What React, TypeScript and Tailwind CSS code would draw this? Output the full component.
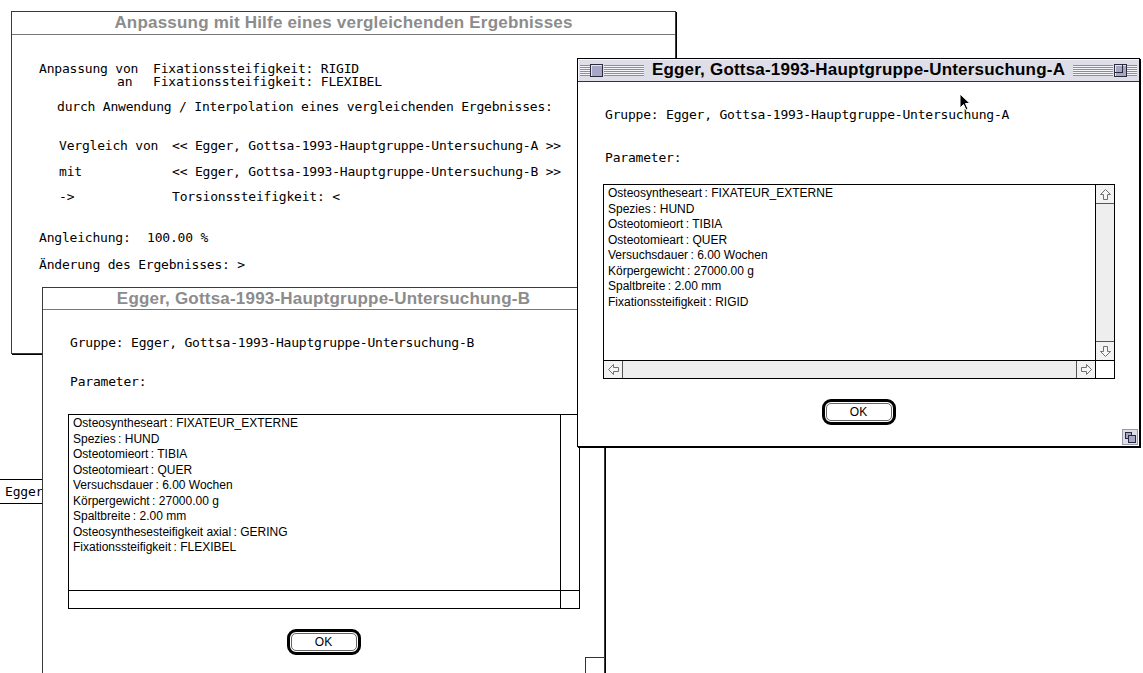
import type { ReactNode } from "react";

// Classic platinum-style desktop: three overlapping dialog windows.
const mono = "font-['DejaVu_Sans_Mono',monospace] text-[13px] tracking-[-0.2px] leading-[12px] whitespace-pre";
const chrome = "font-['Liberation_Sans',Arial,sans-serif]";
const stripes =
  "h-[11px] bg-[repeating-linear-gradient(to_bottom,#8c8ca4_0px,#8c8ca4_1px,#f4f4fa_1px,#f4f4fa_2px)]";

const PARAMS_A = [
  ["Osteosyntheseart", "FIXATEUR_EXTERNE"],
  ["Spezies", "HUND"],
  ["Osteotomieort", "TIBIA"],
  ["Osteotomieart", "QUER"],
  ["Versuchsdauer", "6.00 Wochen"],
  ["Körpergewicht", "27000.00 g"],
  ["Spaltbreite", "2.00 mm"],
  ["Fixationssteifigkeit", "RIGID"],
];

const PARAMS_B = [
  ["Osteosyntheseart", "FIXATEUR_EXTERNE"],
  ["Spezies", "HUND"],
  ["Osteotomieort", "TIBIA"],
  ["Osteotomieart", "QUER"],
  ["Versuchsdauer", "6.00 Wochen"],
  ["Körpergewicht", "27000.00 g"],
  ["Spaltbreite", "2.00 mm"],
  ["Osteosynthesesteifigkeit axial", "GERING"],
  ["Fixationssteifigkeit", "FLEXIBEL"],
];

function Arrow({ dir }: { dir: "up" | "down" | "left" | "right" }) {
  const rot = { up: 0, right: 90, down: 180, left: 270 }[dir];
  return (
    <svg width="13" height="13" viewBox="0 0 13 13" className="block">
      <g transform={`rotate(${rot} 6.5 6.5)`}>
        <path d="M6.5 1.5 L11.5 6.5 L8.5 6.5 L8.5 11.5 L4.5 11.5 L4.5 6.5 L1.5 6.5 Z" fill="#f6f6f6" stroke="#707070" strokeWidth="1" />
      </g>
    </svg>
  );
}

function TitleBar({ title, active, h }: { title: string; active?: boolean; h: string }) {
  if (!active) {
    return (
      <div className={`${h} flex items-center justify-center border-b border-[#777] bg-white`}>
        <span className={`${chrome} text-[17px] font-bold text-[#8c8c8c] tracking-[0.2px]`}>{title}</span>
      </div>
    );
  }
  return (
    <div className={`${h} flex items-center border-b border-[#333] bg-[#dedee8] px-[2px] shadow-[inset_1px_1px_0_#f6f6fc]`}>
      <div className={`${stripes} w-[10px]`} />
      <div className="h-[13px] w-[13px] border border-[#2a2a3a] bg-[#a6a6c6] shadow-[inset_1px_1px_0_#e4e4f4]" />
      <div className={`${stripes} ml-[1px] flex-1`} />
      <span className={`${chrome} px-[8px] text-[17px] font-bold tracking-[0.2px] text-black`}>{title}</span>
      <div className={`${stripes} mr-[1px] flex-1`} />
      <div className="h-[13px] w-[13px] border border-[#2a2a3a] bg-[#a6a6c6] shadow-[inset_1px_1px_0_#e4e4f4]">
        <div className="h-[8px] w-[8px] border-r border-b border-[#2a2a3a]" />
      </div>
      <div className={`${stripes} w-[10px]`} />
    </div>
  );
}

function Window({
  title,
  active,
  titleH,
  className,
  children,
}: {
  title: string;
  active?: boolean;
  titleH: string;
  className: string;
  children: ReactNode;
}) {
  return (
    <div
      className={`absolute flex flex-col bg-white border ${active ? "border-black" : "border-[#3a3a3a]"} shadow-[1px_1px_0_#000] ${className}`}
    >
      <TitleBar title={title} active={active} h={titleH} />
      <div className="relative flex flex-1 flex-col">{children}</div>
    </div>
  );
}

function ParamList({ rows, active }: { rows: string[][]; active?: boolean }) {
  return (
    <div className="ml-[25px] flex h-[195px] w-[512px] flex-col border border-black">
      <div className="flex min-h-0 flex-1">
        <div className={`${chrome} flex-1 pl-[4px] pt-[1px] text-[12px] leading-[15.5px] text-black`}>
          {rows.map(([k, v]) => (
            <div key={k}>
              {k}
              {"\u2009: "}
              {v}
            </div>
          ))}
        </div>
        <div className={`flex w-[19px] flex-col border-l border-black ${active ? "bg-[#eeeeee]" : "bg-white"}`}>
          {active && (
            <>
              <div className="flex h-[19px] items-center justify-center border-b border-[#555] bg-[#f2f2f2]">
                <Arrow dir="up" />
              </div>
              <div className="flex-1" />
              <div className="flex h-[19px] items-center justify-center border-t border-[#555] bg-[#f2f2f2]">
                <Arrow dir="down" />
              </div>
            </>
          )}
        </div>
      </div>
      <div className="flex h-[18px] border-t border-black">
        <div className={`flex flex-1 ${active ? "bg-[#eeeeee]" : "bg-white"}`}>
          {active && (
            <>
              <div className="flex w-[19px] items-center justify-center border-r border-[#555] bg-[#f2f2f2]">
                <Arrow dir="left" />
              </div>
              <div className="flex-1" />
              <div className="flex w-[19px] items-center justify-center border-l border-[#555] bg-[#f2f2f2]">
                <Arrow dir="right" />
              </div>
            </>
          )}
        </div>
        <div className="w-[19px] border-l border-black bg-white" />
      </div>
    </div>
  );
}

function OkButton() {
  return (
    <div className="mx-auto mt-[20px] h-[26px] w-[74px] rounded-[9px] border-[3px] border-black p-[1px]">
      <div className={`${chrome} flex h-full items-center justify-center rounded-[5px] border border-[#666] bg-white text-[12px] text-black`}>
        OK
      </div>
    </div>
  );
}

export default function App() {
  return (
    <div className="relative h-[673px] w-[1143px] overflow-hidden bg-white">
      {/* list of another window peeking out on the left */}
      <div className={`${mono} absolute left-[-3px] top-[479px] h-[25px] w-[52px] border border-black bg-white pl-[7px] pt-[6px]`}>
        Egger
      </div>

      {/* Anpassung dialog (inactive, behind) */}
      <Window
        title="Anpassung mit Hilfe eines vergleichenden Ergebnisses"
        titleH="h-[23px]"
        className="left-[11px] top-[11px] h-[343px] w-[665px]"
      >
        <div className={`${mono} text-black`}>
          <div className="flex pl-[27px] pt-[28px]">
            <span className="w-[114px]">Anpassung von</span>
            <span>Fixationssteifigkeit: RIGID</span>
          </div>
          <div className="mt-[1px] flex pl-[27px]">
            <span className="w-[114px] pl-[78px]">an</span>
            <span>Fixationssteifigkeit: FLEXIBEL</span>
          </div>
          <div className="mt-[13px] pl-[45px]">durch Anwendung / Interpolation eines vergleichenden Ergebnisses:</div>
          <div className="mt-[27px] flex pl-[47px]">
            <span className="w-[113px]">Vergleich von</span>
            <span>{"<< Egger, Gottsa-1993-Hauptgruppe-Untersuchung-A >>"}</span>
          </div>
          <div className="mt-[14px] flex pl-[47px]">
            <span className="w-[113px]">mit</span>
            <span>{"<< Egger, Gottsa-1993-Hauptgruppe-Untersuchung-B >>"}</span>
          </div>
          <div className="mt-[13px] flex pl-[47px]">
            <span className="w-[113px]">{"->"}</span>
            <span>{"Torsionssteifigkeit: <"}</span>
          </div>
          <div className="mt-[29px] flex pl-[27px]">
            <span className="w-[108px]">Angleichung:</span>
            <span>100.00 %</span>
          </div>
          <div className="mt-[15px] pl-[27px]">{"Änderung des Ergebnisses: >"}</div>
        </div>
      </Window>

      {/* Gruppe B (inactive) */}
      <Window
        title="Egger, Gottsa-1993-Hauptgruppe-Untersuchung-B"
        titleH="h-[22px]"
        className="left-[42px] top-[287px] h-[388px] w-[563px]"
      >
        <div className={`${mono} pl-[27px] pt-[27px] text-black`}>Gruppe: Egger, Gottsa-1993-Hauptgruppe-Untersuchung-B</div>
        <div className={`${mono} mt-[27px] pl-[27px] text-black`}>Parameter:</div>
        <div className="mt-[26px]">
          <ParamList rows={PARAMS_B} />
        </div>
        <OkButton />
        <div className="absolute bottom-[0px] right-[0px] h-[17px] w-[19px] border-l border-t border-[#333]" />
      </Window>

      {/* Gruppe A (front, active) */}
      <Window
        title="Egger, Gottsa-1993-Hauptgruppe-Untersuchung-A"
        active
        titleH="h-[23px]"
        className="left-[577px] top-[58px] h-[389px] w-[563px]"
      >
        <div className={`${mono} pl-[27px] pt-[27px] text-black`}>Gruppe: Egger, Gottsa-1993-Hauptgruppe-Untersuchung-A</div>
        <div className={`${mono} mt-[31px] pl-[27px] text-black`}>Parameter:</div>
        <div className="mt-[20px]">
          <ParamList rows={PARAMS_A} active />
        </div>
        <OkButton />
        <svg width="16" height="16" viewBox="0 0 16 16" className="absolute bottom-[1px] right-[1px]">
          <rect x="0.5" y="0.5" width="15" height="15" fill="#dedee8" stroke="#9a9ab0" />
          <rect x="3.5" y="3.5" width="6" height="6" fill="#a6a6c6" stroke="#2a2a3a" />
          <rect x="6.5" y="6.5" width="7" height="7" fill="#a6a6c6" stroke="#2a2a3a" />
        </svg>
      </Window>

      {/* mouse pointer */}
      <svg width="13" height="20" viewBox="0 0 13 20" className="absolute left-[959px] top-[93px]">
        <path d="M1 1 L1 15 L4.5 11.5 L7 17 L9 16 L6.5 10.5 L11 10.5 Z" fill="#000" stroke="#fff" strokeWidth="1" />
      </svg>
    </div>
  );
}
